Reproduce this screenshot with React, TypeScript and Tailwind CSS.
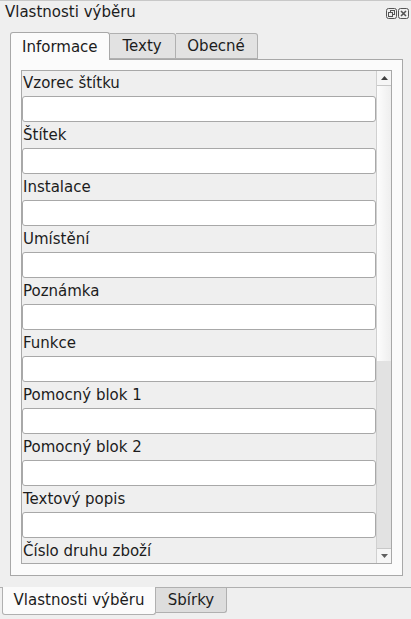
const fields = [
  "Vzorec štítku",
  "Štítek",
  "Instalace",
  "Umístění",
  "Poznámka",
  "Funkce",
  "Pomocný blok 1",
  "Pomocný blok 2",
  "Textový popis",
  "Číslo druhu zboží",
];

function FloatIcon() {
  return (
    <svg width="11" height="11" viewBox="0 0 11 11" fill="none" stroke="#555" strokeWidth="1">
      <rect x="0.5" y="0.5" width="10" height="10" rx="2" />
      <rect x="4.5" y="2.5" width="4" height="4" />
      <rect x="2.5" y="4.5" width="4" height="4" fill="#efefef" />
    </svg>
  );
}

function CloseIcon() {
  return (
    <svg width="11" height="11" viewBox="0 0 11 11" fill="none" stroke="#555" strokeWidth="1">
      <rect x="0.5" y="0.5" width="10" height="10" rx="2" />
      <path d="M3 3 L8 8 M8 3 L3 8" strokeWidth="1.6" />
    </svg>
  );
}

export default function App() {
  return (
    <div className="w-[411px] h-[619px] bg-[#efefef] font-['DejaVu_Sans',sans-serif] text-[15px] text-[#1c1c1c] flex flex-col border-t border-[#c8c8c8] overflow-hidden">
      {/* dock title */}
      <div className="h-[22px] flex items-center justify-between pl-[5px] pr-[2px]">
        <span className="leading-none">Vlastnosti výběru</span>
        <div className="flex gap-[1px] mt-[2px]">
          <FloatIcon />
          <CloseIcon />
        </div>
      </div>

      {/* tabs */}
      <div className="h-[36px] flex items-end pl-[10px]">
        <div className="h-[28px] px-[11px] pt-[2px] bg-[#fbfbfb] border border-b-0 border-[#a8a8a8] rounded-t-[3px] flex items-center relative top-[1px] z-10">
          Informace
        </div>
        <div className="h-[26px] w-[66px] pt-[1px] bg-[#e2e2e2] border border-l-0 border-[#b0b0b0] rounded-tr-[3px] flex items-center justify-center">
          Texty
        </div>
        <div className="h-[26px] w-[82px] pt-[1px] bg-[#e2e2e2] border border-l-0 border-[#b0b0b0] rounded-tr-[3px] flex items-center justify-center">
          Obecné
        </div>
      </div>

      {/* tab page */}
      <div className="ml-[10px] w-[393px] h-[517px] bg-[#fbfbfb] border border-[#a8a8a8] p-[10px] pb-[11px]">
        <div className="h-full border border-[#a8a8a8] bg-[#efefef] flex overflow-hidden">
          <div className="flex-1 overflow-hidden">
            {fields.map((f) => (
              <div key={f}>
                <div className="h-[24px] flex items-center pl-[1px] pt-[1px]">{f}</div>
                <div className="h-[28px] py-[1px]">
                  <div className="h-[26px] bg-white border border-[#a8a8a8] rounded-[3px]" />
                </div>
              </div>
            ))}
          </div>
          {/* scrollbar */}
          <div className="w-[15px] flex flex-col border-l border-[#d0d0d0]">
            <div className="h-[15px] bg-[#f6f6f6] border-b border-[#c8c8c8] flex items-center justify-center">
              <svg width="7" height="4" viewBox="0 0 7 4"><path d="M0 4 L3.5 0 L7 4 Z" fill="#404040" /></svg>
            </div>
            <div className="h-[275px] bg-gradient-to-r from-[#fdfdfd] to-[#eeeeee]" />
            <div className="flex-1 bg-[#e2e2e2]" />
            <div className="h-[15px] bg-[#f6f6f6] border-t border-[#c8c8c8] flex items-center justify-center">
              <svg width="7" height="4" viewBox="0 0 7 4"><path d="M0 0 L3.5 4 L7 0 Z" fill="#606060" /></svg>
            </div>
          </div>
        </div>
      </div>

      {/* bottom tabs */}
      <div className="mt-[11px] border-t border-[#b0b0b0] flex items-start pl-[2px]">
        <div className="h-[28px] w-[154px] bg-[#fbfbfb] border border-t-0 border-[#b0b0b0] rounded-b-[3px] flex items-center justify-center relative -top-[1px]">
          Vlastnosti výběru
        </div>
        <div className="h-[25px] w-[71px] bg-[#dddddd] border border-t-0 border-l-0 border-[#b0b0b0] rounded-br-[3px] flex items-center justify-center">
          Sbírky
        </div>
      </div>
    </div>
  );
}
